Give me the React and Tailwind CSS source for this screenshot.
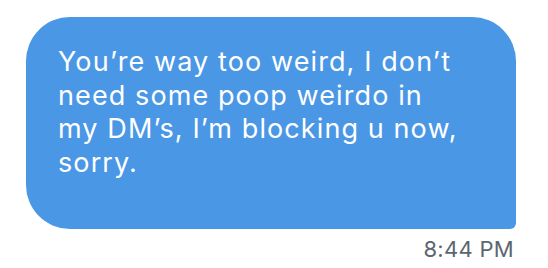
export default function App() {
  return (
    <div className="w-[548px] h-[268px] bg-white flex flex-col items-end pt-[17px] pr-8" style={{ fontFamily: 'Inter, "Liberation Sans", sans-serif' }}>
      <div className="w-[490px] h-[212px] bg-[#4a97e6] rounded-[44px] rounded-br-[6px] pl-8 pt-[28px] text-white text-[27px] leading-[33.5px] tracking-[1.1px]">
        You’re way too weird, I don’t<br />
        need some poop weirdo in<br />
        my DM’s, I’m blocking u now,<br />
        sorry.
      </div>
      <div className="mt-[8px] mr-[2px] text-[22px] text-[#5b6670] leading-[24px] tracking-[0.3px]">8:44 PM</div>
    </div>
  );
}
